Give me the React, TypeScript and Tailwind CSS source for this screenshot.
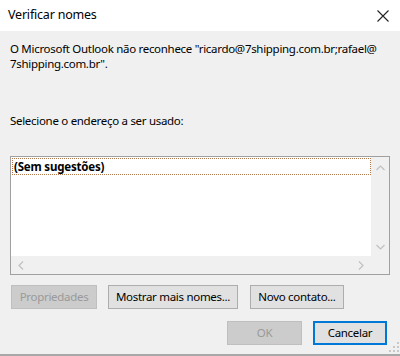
import React from "react";

const font = { fontFamily: '"Segoe UI", "Noto Sans", "Open Sans", sans-serif' };

const Btn: React.FC<{ label: string; w: string; disabled?: boolean; primary?: boolean }> = ({
  label,
  w,
  disabled,
  primary,
}) => {
  let cls = "h-[24px] flex items-center justify-center text-[11.5px] tracking-[-0.3px] ";
  if (disabled) cls += "bg-[#cccccc] border border-[#bfbfbf] text-[#9a9a9a]";
  else if (primary) cls += "bg-[#e1e1e1] border-2 border-[#0078d7] text-[#000]";
  else cls += "bg-[#e1e1e1] border border-[#adadad] text-[#000]";
  return <div className={cls + " " + w}>{label}</div>;
};

const App: React.FC = () => {
  return (
    <div className="w-[400px] h-[356px] bg-[#f0f0f0] flex flex-col overflow-hidden" style={font}>
      <div className="h-[31px] bg-white flex items-center justify-between pl-[8px] pr-[11px]">
        <span className="text-[12.5px] tracking-[-0.2px] text-[#000]">Verificar nomes</span>
        <svg width="12" height="12" viewBox="0 0 12 12">
          <path d="M0.5 0.5 L11.5 11.5 M11.5 0.5 L0.5 11.5" stroke="#222" strokeWidth="1.1" />
        </svg>
      </div>
      <div className="flex flex-col px-[10px] flex-1 relative">
        <p className="mt-[10px] text-[11.5px] tracking-[-0.3px] leading-[15px] text-[#000] whitespace-nowrap">
          O Microsoft Outlook não reconhece "ricardo@7shipping.com.br;rafael@
          <br />
          7shipping.com.br".
        </p>
        <p className="mt-[42px] text-[11.5px] tracking-[-0.3px] leading-[15px] text-[#000]">
          Selecione o endereço a ser usado:
        </p>
        <div className="mt-[28px] h-[119px] w-[380px] border border-[#a0a0a0] bg-[#f0f0f0] flex flex-col">
          <div className="flex flex-1">
            <div className="flex-1 bg-white pt-[1px] pl-[1px]">
              <div className="h-[17px] border border-dotted border-[#b07a4e] bg-white text-[11.5px] tracking-[-0.2px] font-bold leading-[15px] pl-[1px]">
                (Sem sugestões)
              </div>
            </div>
            <div className="w-[18px] flex flex-col items-center justify-between pt-[8px] pb-[6px]">
              <svg width="9" height="6" viewBox="0 0 9 6">
                <path d="M0.5 5 L4.5 1 L8.5 5" fill="none" stroke="#c0c0c0" strokeWidth="1.2" />
              </svg>
              <svg width="9" height="6" viewBox="0 0 9 6">
                <path d="M0.5 1 L4.5 5 L8.5 1" fill="none" stroke="#c0c0c0" strokeWidth="1.2" />
              </svg>
            </div>
          </div>
          <div className="h-[18px] flex items-center justify-between pl-[7px] pr-[25px]">
            <svg width="6" height="9" viewBox="0 0 6 9">
              <path d="M5 0.5 L1 4.5 L5 8.5" fill="none" stroke="#c0c0c0" strokeWidth="1.2" />
            </svg>
            <svg width="6" height="9" viewBox="0 0 6 9">
              <path d="M1 0.5 L5 4.5 L1 8.5" fill="none" stroke="#c0c0c0" strokeWidth="1.2" />
            </svg>
          </div>
        </div>
        <div className="mt-[10px] flex pl-[1px]">
          <Btn label="Propriedades" w="w-[86px]" disabled />
          <div className="w-[11px]" />
          <Btn label="Mostrar mais nomes..." w="w-[130px]" />
          <div className="w-[12px]" />
          <Btn label="Novo contato..." w="w-[94px]" />
        </div>
        <div className="mt-[12px] flex justify-end pr-[3px]">
          <Btn label="OK" w="w-[75px]" disabled />
          <div className="w-[11px]" />
          <Btn label="Cancelar" w="w-[74px]" primary />
        </div>
        <svg className="absolute right-[1px] bottom-[2px]" width="10" height="10" viewBox="0 0 10 10">
          <rect x="8" y="0" width="2" height="2" fill="#c8c8c8" />
          <rect x="4" y="4" width="2" height="2" fill="#c8c8c8" />
          <rect x="8" y="4" width="2" height="2" fill="#c8c8c8" />
          <rect x="0" y="8" width="2" height="2" fill="#c8c8c8" />
          <rect x="4" y="8" width="2" height="2" fill="#c8c8c8" />
          <rect x="8" y="8" width="2" height="2" fill="#c8c8c8" />
        </svg>
      </div>
      <div className="h-[2px] bg-[#a8a8a8]" />
    </div>
  );
};

export default App;
